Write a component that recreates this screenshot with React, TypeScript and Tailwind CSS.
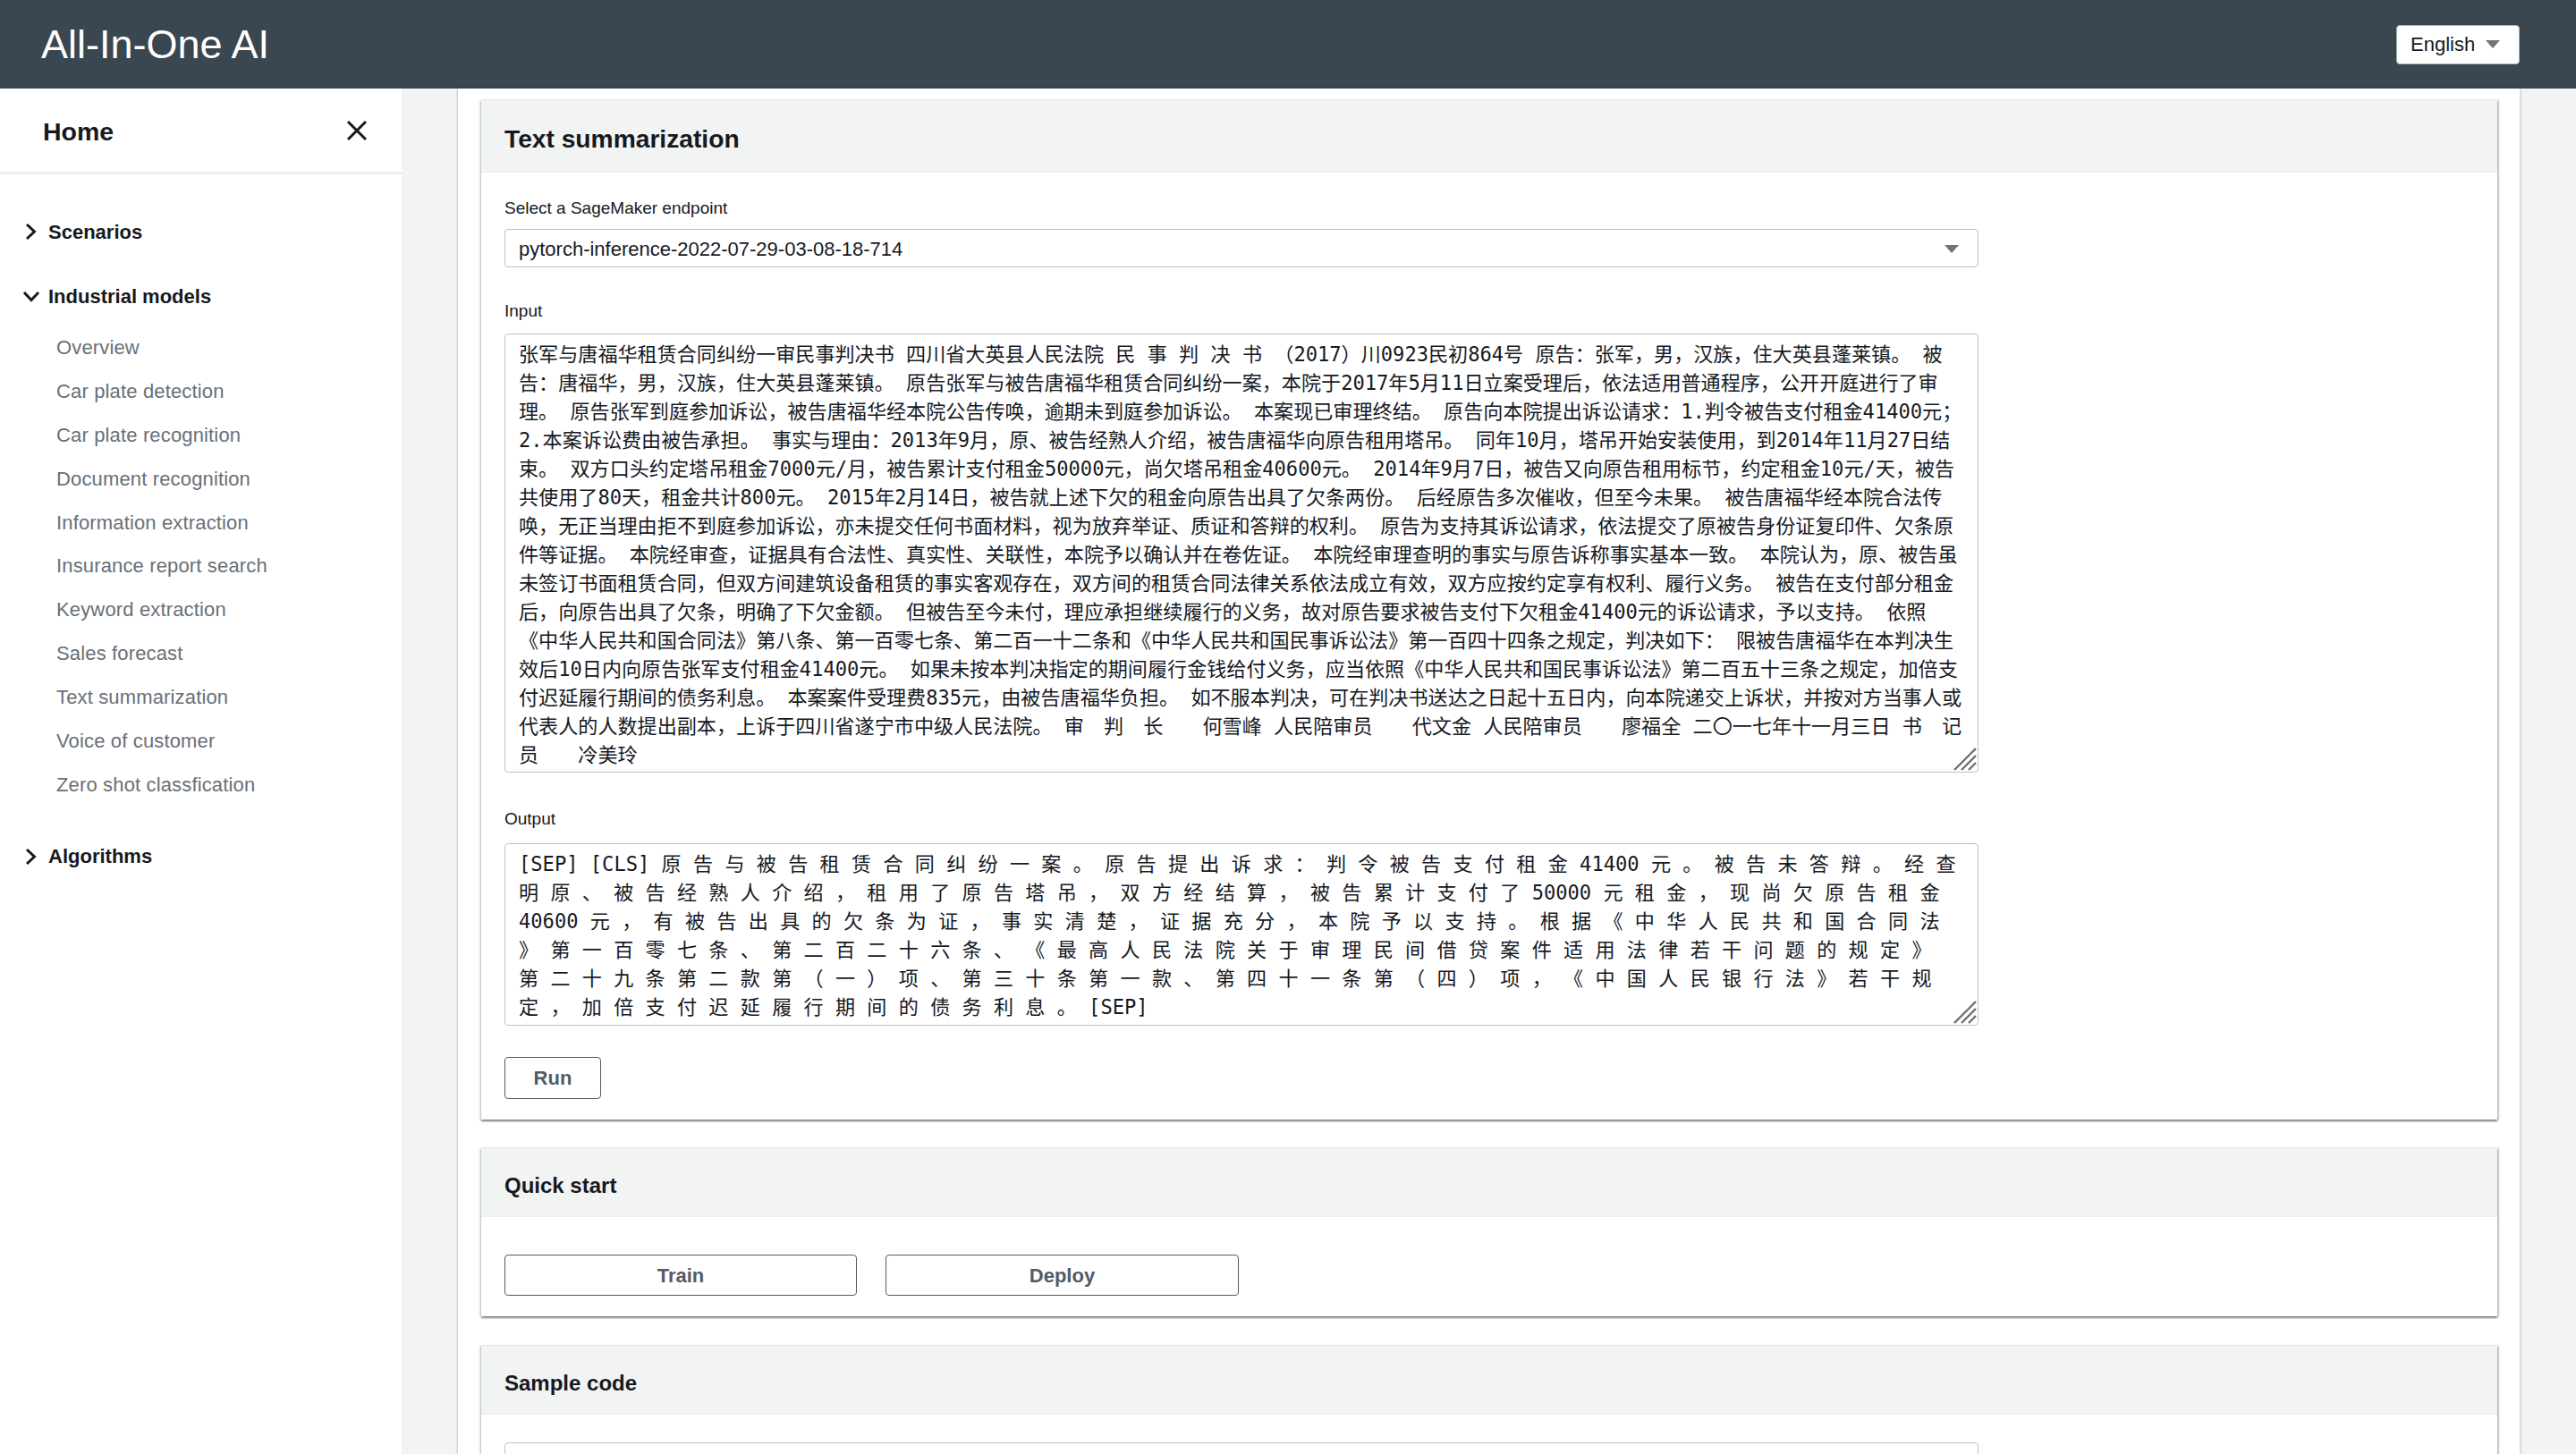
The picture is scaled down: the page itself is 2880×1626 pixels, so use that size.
const inputText = [
  "张军与唐福华租赁合同纠纷一审民事判决书 四川省大英县人民法院 民 事 判 决 书 （2017）川0923民初864号 原告：张军，男，汉族，住大英县蓬莱镇。 被",
  "告：唐福华，男，汉族，住大英县蓬莱镇。 原告张军与被告唐福华租赁合同纠纷一案，本院于2017年5月11日立案受理后，依法适用普通程序，公开开庭进行了审",
  "理。 原告张军到庭参加诉讼，被告唐福华经本院公告传唤，逾期未到庭参加诉讼。 本案现已审理终结。 原告向本院提出诉讼请求：1.判令被告支付租金41400元；",
  "2.本案诉讼费由被告承担。 事实与理由：2013年9月，原、被告经熟人介绍，被告唐福华向原告租用塔吊。 同年10月，塔吊开始安装使用，到2014年11月27日结",
  "束。 双方口头约定塔吊租金7000元/月，被告累计支付租金50000元，尚欠塔吊租金40600元。 2014年9月7日，被告又向原告租用标节，约定租金10元/天，被告",
  "共使用了80天，租金共计800元。 2015年2月14日，被告就上述下欠的租金向原告出具了欠条两份。 后经原告多次催收，但至今未果。 被告唐福华经本院合法传",
  "唤，无正当理由拒不到庭参加诉讼，亦未提交任何书面材料，视为放弃举证、质证和答辩的权利。 原告为支持其诉讼请求，依法提交了原被告身份证复印件、欠条原",
  "件等证据。 本院经审查，证据具有合法性、真实性、关联性，本院予以确认并在卷佐证。 本院经审理查明的事实与原告诉称事实基本一致。 本院认为，原、被告虽",
  "未签订书面租赁合同，但双方间建筑设备租赁的事实客观存在，双方间的租赁合同法律关系依法成立有效，双方应按约定享有权利、履行义务。 被告在支付部分租金",
  "后，向原告出具了欠条，明确了下欠金额。 但被告至今未付，理应承担继续履行的义务，故对原告要求被告支付下欠租金41400元的诉讼请求，予以支持。 依照",
  "《中华人民共和国合同法》第八条、第一百零七条、第二百一十二条和《中华人民共和国民事诉讼法》第一百四十四条之规定，判决如下： 限被告唐福华在本判决生",
  "效后10日内向原告张军支付租金41400元。 如果未按本判决指定的期间履行金钱给付义务，应当依照《中华人民共和国民事诉讼法》第二百五十三条之规定，加倍支",
  "付迟延履行期间的债务利息。 本案案件受理费835元，由被告唐福华负担。 如不服本判决，可在判决书送达之日起十五日内，向本院递交上诉状，并按对方当事人或",
  "代表人的人数提出副本，上诉于四川省遂宁市中级人民法院。 审　判　长　　何雪峰 人民陪审员　　代文金 人民陪审员　　廖福全 二〇一七年十一月三日 书　记",
  "员　　冷美玲",
].join("\n");

const outputText = [
  "[SEP] [CLS] 原 告 与 被 告 租 赁 合 同 纠 纷 一 案 。 原 告 提 出 诉 求 ： 判 令 被 告 支 付 租 金 41400 元 。 被 告 未 答 辩 。 经 查",
  "明 原 、 被 告 经 熟 人 介 绍 ， 租 用 了 原 告 塔 吊 ， 双 方 经 结 算 ， 被 告 累 计 支 付 了 50000 元 租 金 ， 现 尚 欠 原 告 租 金",
  "40600 元 ， 有 被 告 出 具 的 欠 条 为 证 ， 事 实 清 楚 ， 证 据 充 分 ， 本 院 予 以 支 持 。 根 据 《 中 华 人 民 共 和 国 合 同 法",
  "》 第 一 百 零 七 条 、 第 二 百 二 十 六 条 、 《 最 高 人 民 法 院 关 于 审 理 民 间 借 贷 案 件 适 用 法 律 若 干 问 题 的 规 定 》",
  "第 二 十 九 条 第 二 款 第 （ 一 ） 项 、 第 三 十 条 第 一 款 、 第 四 十 一 条 第 （ 四 ） 项 ， 《 中 国 人 民 银 行 法 》 若 干 规",
  "定 ， 加 倍 支 付 迟 延 履 行 期 间 的 债 务 利 息 。 [SEP]",
].join("\n");

const models = [
  "Overview",
  "Car plate detection",
  "Car plate recognition",
  "Document recognition",
  "Information extraction",
  "Insurance report search",
  "Keyword extraction",
  "Sales forecast",
  "Text summarization",
  "Voice of customer",
  "Zero shot classfication",
];

function Caret() {
  return (
    <svg width="16" height="9" viewBox="0 0 16 9" className="shrink-0">
      <polygon points="0,0 16,0 8,9" fill="#6f7479" />
    </svg>
  );
}

function ChevronRight() {
  return (
    <svg width="13" height="20" viewBox="0 0 13 20" className="ml-[28px] mr-[13px] shrink-0">
      <path d="M2 2 L10.5 10 L2 18" fill="none" stroke="#16191f" strokeWidth="3" />
    </svg>
  );
}

function ChevronDown() {
  return (
    <svg width="20" height="13" viewBox="0 0 20 13" className="ml-[25px] mr-[9px] shrink-0">
      <path d="M2 2 L10 10.5 L18 2" fill="none" stroke="#16191f" strokeWidth="3" />
    </svg>
  );
}

function Grip() {
  return (
    <svg width="26" height="26" viewBox="0 0 26 26" className="absolute right-[2px] bottom-[2px] pointer-events-none">
      <path d="M1 25 L25 1" stroke="#6f6f6f" strokeWidth="2.4" />
      <path d="M9 25 L25 9" stroke="#6f6f6f" strokeWidth="2.4" />
      <path d="M17 25 L25 17" stroke="#6f6f6f" strokeWidth="2.4" />
    </svg>
  );
}

function Area({ text, height }: { text: string; height: string }) {
  return (
    <div className="relative w-[1648px]">
      <textarea
        readOnly
        wrap="off"
        defaultValue={text}
        className={`block w-full ${height} resize-none overflow-hidden rounded-[4px] border border-[#bdc1c4] bg-white pl-[15px] pr-[4px] pt-[5.5px] pb-[2px] font-['DejaVu_Sans_Mono','Noto_Sans_CJK_SC',monospace] text-[22.1px] leading-[32px] text-[#16191f] outline-none`}
      />
      <Grip />
    </div>
  );
}

function Card({
  title,
  titleClass,
  headerClass,
  children,
}: {
  title: string;
  titleClass: string;
  headerClass: string;
  children: React.ReactNode;
}) {
  return (
    <section className="bg-white border-t border-[#e6e8e8] shadow-[0_2px_2px_0_rgba(0,28,36,0.45),2px_1px_2px_0_rgba(0,28,36,0.2),-2px_1px_2px_0_rgba(0,28,36,0.1)]">
      <div className={`flex ${headerClass} items-center border-b border-[#eaeded] bg-[#f2f3f3] px-[26px]`}>
        <h2 className={`${titleClass} font-bold text-[#16191f]`}>{title}</h2>
      </div>
      {children}
    </section>
  );
}

function Btn({ label, width, height }: { label: string; width: string; height: string }) {
  return (
    <button className={`${width} ${height} rounded-[4px] border border-[#545b64] bg-white text-[22px] font-bold text-[#545b64]`}>
      {label}
    </button>
  );
}

export default function App() {
  return (
    <div className="flex h-screen flex-col overflow-hidden bg-[#f2f3f3] font-['Liberation_Sans',Arial,sans-serif] text-[#16191f]">
      <header className="flex h-[99px] shrink-0 items-center justify-between bg-[#3a4650] pl-[46px] pr-[63px]">
        <div className="text-[45px] leading-none text-white">All-In-One AI</div>
        <div className="flex h-[44px] w-[138px] items-center justify-between rounded-[4px] border border-[#aab7b8] bg-white pl-[15px] pr-[21px] text-[22px]">
          <span>English</span>
          <Caret />
        </div>
      </header>
      <div className="flex min-h-0 flex-1">
        <aside className="w-[449px] shrink-0 bg-white">
          <div className="flex h-[96px] items-center justify-between border-b-[3px] border-[#eaeded] pl-[48px] pr-[38px] pt-[4px]">
            <span className="text-[28.5px] font-bold">Home</span>
            <svg width="24" height="24" viewBox="0 0 24 24" className="mb-[4px]">
              <path d="M2 2 L22 22 M22 2 L2 22" fill="none" stroke="#16191f" strokeWidth="3" />
            </svg>
          </div>
          <nav className="pt-[40px] text-[22px]">
            <div className="flex h-[48px] items-center font-bold">
              <ChevronRight />
              <span>Scenarios</span>
            </div>
            <div className="mt-[24px] flex h-[48px] items-center font-bold">
              <ChevronDown />
              <span>Industrial models</span>
            </div>
            <ul className="mt-[9px] pl-[63px] tracking-[0.15px] text-[#687078]">
              {models.map((m) => (
                <li key={m} className="flex h-[48.9px] items-center">{m}</li>
              ))}
            </ul>
            <div className="mt-[32px] flex h-[48px] items-center font-bold">
              <ChevronRight />
              <span>Algorithms</span>
            </div>
          </nav>
        </aside>
        <main className="mx-[63px] flex-1 overflow-hidden bg-white pl-[26px] pr-[25px] pt-[12px] shadow-[0_0_3px_0_rgba(0,28,36,0.35)]">
          <Card title="Text summarization" titleClass="text-[28.2px]" headerClass="h-[81px] pt-[7px]">
            <div className="px-[26px] pb-[23px] pt-[27px]">
              <div className="h-[26px] text-[19px] leading-[26px]">Select a SageMaker endpoint</div>
              <div className="mt-[10px] flex h-[43px] w-[1648px] items-center justify-between rounded-[4px] border border-[#bdc1c4] pl-[15px] pr-[21px] pt-[2px] text-[22px]">
                <span>pytorch-inference-2022-07-29-03-08-18-714</span>
                <Caret />
              </div>
              <div className="mt-[36px] h-[26px] text-[19px] leading-[26px]">Input</div>
              <div className="mt-[12px]">
                <Area text={inputText} height="h-[491px]" />
              </div>
              <div className="mt-[39px] h-[26px] text-[19px] leading-[26px]">Output</div>
              <div className="mt-[14px]">
                <Area text={outputText} height="h-[204px]" />
              </div>
              <div className="mt-[35px]">
                <Btn label="Run" width="w-[108px]" height="h-[47px]" />
              </div>
            </div>
          </Card>
          <div className="mt-[31px]">
            <Card title="Quick start" titleClass="text-[24px]" headerClass="h-[77px] pt-[8px]">
              <div className="flex gap-[32px] px-[26px] pb-[23px] pt-[42px]">
                <Btn label="Train" width="w-[394px]" height="h-[46px]" />
                <Btn label="Deploy" width="w-[395px]" height="h-[46px]" />
              </div>
            </Card>
          </div>
          <div className="mt-[32px]">
            <Card title="Sample code" titleClass="text-[24px]" headerClass="h-[77px] pt-[8px]">
              <div className="px-[26px] pt-[31px] pb-[26px]">
                <div className="h-[200px] w-[1648px] rounded-[4px] border border-[#bdc1c4]" />
              </div>
            </Card>
          </div>
        </main>
      </div>
    </div>
  );
}
